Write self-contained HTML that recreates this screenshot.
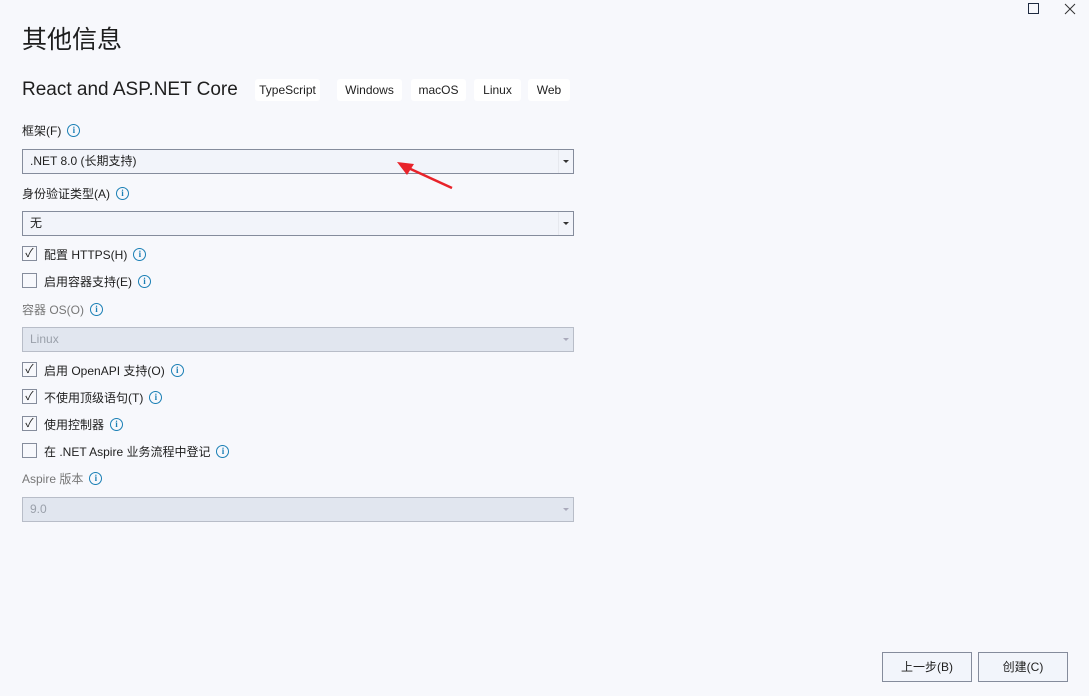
<!DOCTYPE html>
<html><head><meta charset="utf-8"><style>
*{margin:0;padding:0;box-sizing:border-box}
body{width:1089px;height:696px;background:#f7f8fc;font-family:"Liberation Sans","Noto Sans CJK SC",sans-serif;color:#1e1e1e;position:relative;overflow:hidden;font-size:12px}
.a{position:absolute;white-space:nowrap}
.tag{position:absolute;top:79px;height:22px;background:#fff;border-radius:3px;font-size:12px;line-height:22px;text-align:center}
.sel{position:absolute;left:22px;width:552px;height:25px;border:1px solid #858c9c;background:#f2f4fa;font-size:12px;line-height:23px;padding-left:7px}
.sel.d{background:#e1e6ef;border-color:#b8bdc8;color:#9aa0aa}
.sel::after{content:"";position:absolute;right:4px;top:10px;border:3px solid transparent;border-top:3px solid #333}
.sel.d::after{border-top-color:#aab}
.sel .sep{position:absolute;right:14px;top:0;bottom:0;width:1px;background:#e6e8ee}
.cb{position:absolute;left:22px;width:15px;height:15px;border:1px solid #858c9c;background:#f7f8fc;font-size:12px;line-height:13px;text-align:center}
.lbl{position:absolute;font-size:12px;white-space:nowrap;display:flex;align-items:center;height:16px}
.i{display:inline-block;width:13px;height:13px;border:1.5px solid #1a7fb5;border-radius:50%;color:#1a7fb5;font-size:9px;line-height:10px;text-align:center;font-weight:bold;margin-left:6px;font-family:"Liberation Serif",serif}
.btn{position:absolute;top:652px;width:90px;height:30px;border:1px solid #858c9c;background:#f2f5fb;font-size:12px;line-height:28px;text-align:center}
.g{color:#777}
</style></head><body>
<div class="a" style="left:1028px;top:3px;width:11px;height:11px;border:1.5px solid #1e2a40"></div>
<svg class="a" style="left:1064px;top:3px" width="12" height="12"><path d="M1 1L11 11M11 1L1 11" stroke="#333" stroke-width="1"/></svg>
<div class="a" style="left:22px;top:24px;font-size:25px;line-height:32px">其他信息</div>
<div class="a" style="left:22px;top:78px;font-size:19px;line-height:24px">React and ASP.NET Core</div>
<div class="tag" style="left:255px;width:65px">TypeScript</div>
<div class="tag" style="left:337px;width:65px">Windows</div>
<div class="tag" style="left:411px;width:55px">macOS</div>
<div class="tag" style="left:474px;width:47px">Linux</div>
<div class="tag" style="left:528px;width:42px">Web</div>
<div class="lbl" style="left:22px;top:122px">框架(F)<span class="i">i</span></div>
<div class="sel" style="top:149px">.NET 8.0 (长期支持)<span class="sep"></span></div>
<div class="lbl" style="left:22px;top:185px">身份验证类型(A)<span class="i">i</span></div>
<div class="sel" style="top:211px">无<span class="sep"></span></div>
<div class="cb" style="top:246px">✓</div><div class="lbl" style="left:44px;top:246px">配置 HTTPS(H)<span class="i">i</span></div>
<div class="cb" style="top:273px"></div><div class="lbl" style="left:44px;top:273px">启用容器支持(E)<span class="i">i</span></div>
<div class="lbl g" style="left:22px;top:301px">容器 OS(O)<span class="i">i</span></div>
<div class="sel d" style="top:327px">Linux</div>
<div class="cb" style="top:362px">✓</div><div class="lbl" style="left:44px;top:362px">启用 OpenAPI 支持(O)<span class="i">i</span></div>
<div class="cb" style="top:389px">✓</div><div class="lbl" style="left:44px;top:389px">不使用顶级语句(T)<span class="i">i</span></div>
<div class="cb" style="top:416px">✓</div><div class="lbl" style="left:44px;top:416px">使用控制器<span class="i">i</span></div>
<div class="cb" style="top:443px"></div><div class="lbl" style="left:44px;top:443px">在 .NET Aspire 业务流程中登记<span class="i">i</span></div>
<div class="lbl g" style="left:22px;top:470px">Aspire 版本<span class="i">i</span></div>
<div class="sel d" style="top:497px">9.0</div>
<svg class="a" style="left:390px;top:155px" width="70" height="40"><path d="M62 33L14 11" stroke="#e8232a" stroke-width="2.5"/><path d="M7 7L24 9L17 20Z" fill="#e8232a"/></svg>
<div class="btn" style="left:882px">上一步(B)</div>
<div class="btn" style="left:978px">创建(C)</div>
</body></html>
